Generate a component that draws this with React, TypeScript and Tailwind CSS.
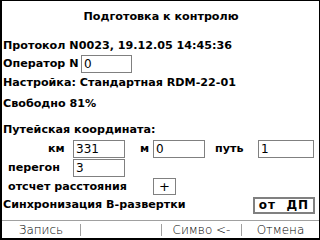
import React from "react";

const F = { fontFamily: '"DejaVu Sans", "Liberation Sans", sans-serif' } as React.CSSProperties;

function Box({ w, children, className = "" }: { w: string; children?: React.ReactNode; className?: string }) {
  return (
    <div className={`${w} h-[18px] border border-[#808080] bg-white flex items-center pl-[2px] text-[12px] font-normal leading-none ${className}`}>
      {children}
    </div>
  );
}

export default function App() {
  return (
    <div className="w-[320px] h-[240px] bg-white text-black border-t border-r border-l-2 border-b-2 border-black flex flex-col text-[11.15px] font-bold leading-none overflow-hidden" style={F}>
      <div className="h-[32px] flex items-center justify-center pl-[1px]">Подготовка к контролю</div>
      <div className="h-[18px] mt-[4px] flex items-center pl-[1px]">Протокол N0023, 19.12.05 14:45:36</div>
      <div className="h-[18px] flex items-center pl-[1px]">
        <span className="w-[78px]">Оператор N</span>
        <Box w="w-[51px]">0</Box>
      </div>
      <div className="h-[18px] mt-[1px] flex items-center pl-[1px]">Настройка: Стандартная RDM-22-01</div>
      <div className="h-[18px] mt-[3px] flex items-center pl-[1px]">Свободно 81%</div>
      <div className="h-[18px] mt-[8px] flex items-center pl-[1px]">Путейская координата:</div>
      <div className="h-[19px] flex items-center">
        <span className="w-[46px]" />
        <span className="w-[25px]">км</span>
        <Box w="w-[52px]">331</Box>
        <span className="w-[15px]" />
        <span className="w-[13px]">м</span>
        <Box w="w-[52px]">0</Box>
        <span className="w-[10px]" />
        <span className="w-[43px]">путь</span>
        <Box w="w-[56px]">1</Box>
      </div>
      <div className="h-[19px] flex items-center">
        <span className="w-[6px]" />
        <span className="w-[65px]">перегон</span>
        <Box w="w-[52px]">3</Box>
      </div>
      <div className="h-[19px] flex items-center">
        <span className="w-[6px]" />
        <span className="w-[145px]">отсчет расстояния</span>
        <div className="w-[23px] h-[17px] border border-[#808080] flex items-center justify-center font-normal text-[13px]">+</div>
      </div>
      <div className="h-[18px] flex items-center justify-between pl-[1px] pr-[4px]">
        <span>Синхронизация B-развертки</span>
        <div className="w-[62px] h-[17px] border-2 border-[#808080] flex items-center justify-center text-[12px] tracking-[1px]">от&nbsp;&nbsp;ДП</div>
      </div>
      <div className="mt-[6px] border-t border-[#a0a0a0] flex-1 flex items-center font-extralight text-[12px]">
        <div className="w-[78px] flex justify-center">Запись</div>
        <div className="w-px h-[12px] bg-[#a0a0a0]" />
        <div className="w-[80px]" />
        <div className="w-px h-[12px] bg-[#a0a0a0]" />
        <div className="w-[79px] flex justify-center">Симво &lt;-</div>
        <div className="w-px h-[12px] bg-[#a0a0a0]" />
        <div className="flex-1 flex justify-center">Отмена</div>
      </div>
    </div>
  );
}
